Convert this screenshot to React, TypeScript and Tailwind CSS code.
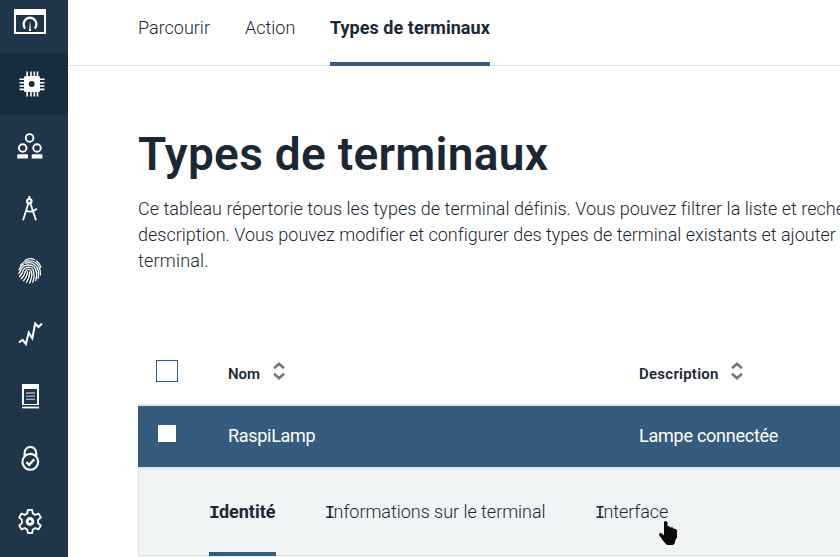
import type { ReactNode } from 'react';

function DashboardIcon() {
  return (
    <svg width="32" height="25" viewBox="0 0 32 25" fill="none">
      <path d="M0 0H32V25H0Z M2 6V23H30V6Z" fill="white" fillRule="evenodd" />
      <path d="M11.2 19.4A6.4 6.4 0 1 1 20.8 19.4" stroke="white" strokeWidth="2.3" />
      <path d="M16 11.5L17 22H15Z" fill="white" />
    </svg>
  );
}

function ChipIcon() {
  return (
    <svg width="26" height="26" viewBox="0 0 26 26">
      <path d="M8.2 .5V25.5M12 .5V25.5M15.3 .5V25.5M18.5 .5V25.5M.5 8.2H25.5M.5 11.7H25.5M.5 15H25.5M.5 18.4H25.5" stroke="white" strokeWidth="1.6" />
      <rect x="5" y="5" width="16" height="16" rx="1.5" fill="white" />
      <circle cx="12.7" cy="13" r="3" fill="#172c3c" />
    </svg>
  );
}

function UsersIcon() {
  return (
    <svg width="26" height="26" viewBox="0 0 26 26" fill="none" stroke="white" strokeWidth="1.9">
      <circle cx="12.6" cy="4.9" r="3.8" />
      <circle cx="5.7" cy="15" r="3.8" />
      <circle cx="20" cy="15" r="3.8" />
      <path d="M.2 25.6V22.5Q.4 21.2 1.5 21.2H9.8Q11 21.2 11 22.5V25.6ZM14.7 25.6V22.5Q14.9 21.2 16 21.2H24.5Q25.5 21.2 25.5 22.5V25.6Z" fill="white" stroke="none" />
    </svg>
  );
}

function CompassIcon() {
  return (
    <svg width="16" height="25" viewBox="0 0 16 25" fill="none" stroke="white">
      <path d="M7.3 0V3" strokeWidth="2" />
      <circle cx="7.3" cy="5.2" r="2.2" strokeWidth="2.2" />
      <path d="M6.3 7.8L1 24.3M8.5 7.8L14 24.3M4.2 14.5C7 16.5 12 15.6 14.8 12.7" strokeWidth="1.8" />
    </svg>
  );
}

function FingerprintIcon() {
  return (
    <svg width="24" height="26" viewBox="0 0 24 26" fill="none" stroke="white" strokeWidth="1.25" strokeLinecap="round">
      <path d="M7 2.2Q12-.5 16.5 1.7M18.3 2.8Q22 5.3 23 9.5" />
      <path d="M2.5 7.2Q6.5 2.3 12 2.8Q18 3.2 20.5 7.8Q22.8 12 22.5 17" />
      <path d="M1 12Q2 8.3 5.3 6.4M7.2 5.5Q13 3.2 17.3 7.2Q21.8 12.3 20.2 20.3" />
      <path d="M.8 15.5Q2.4 14 3 11.5Q5 7.3 10 6.8Q15.6 6.8 17.6 11.3Q19.6 16.4 17.7 22.5" />
      <path d="M1.6 18.5Q4.6 15.5 5.1 12.6Q6.6 9 11 9Q14.5 9.3 15.6 13.3Q16.9 18.6 14.8 24.3" />
      <path d="M3.2 20.8Q6.9 17.4 7.2 13.6Q9 10.4 11.7 11.5Q14.9 13.8 13.4 19.6Q12.8 22.5 11.6 25" />
      <path d="M5.5 22.7Q9.5 18.5 9.6 13.6M8.4 24.3Q11.4 20.3 11.8 14" />
    </svg>
  );
}

function TrendIcon() {
  return (
    <svg width="25" height="24" viewBox="0 0 25 24" fill="none" stroke="white" strokeWidth="2">
      <path d="M1 20.5L4.5 17.8L8 22L10.7 10.5L14.3 16.3L17.2 1.5L20.5 5L24 1.5" />
    </svg>
  );
}

function LogIcon() {
  return (
    <svg width="17" height="25" viewBox="0 0 17 25">
      <path d="M0 0H17V21H0Z M2 5V20H15V5Z" fill="white" fillRule="evenodd" />
      <path d="M0 23.5H17" stroke="white" strokeWidth="1.8" />
      <path d="M4 9H13M4 12.2H13M4 15.4H13" stroke="#aab4bc" strokeWidth="1.3" />
    </svg>
  );
}

function LockIcon() {
  return (
    <svg width="19" height="25" viewBox="0 0 19 25" fill="none" stroke="white" strokeWidth="2.1">
      <circle cx="9.3" cy="15.8" r="7.9" />
      <path d="M3.6 10V6.8A5.8 5.8 0 0 1 15.2 6.8V10" />
      <path d="M5.4 16.2L8.1 18.8L13.2 13.4" strokeWidth="2.3" />
    </svg>
  );
}

function GearIcon() {
  return (
    <svg width="24" height="25" viewBox="0 0 24 25" fill="none" stroke="white" strokeWidth="1.8" strokeLinejoin="round">
      <path d="M9.8 1H14.2L14.8 4.5L17.2 5.9L20.6 4.6L22.8 8.5L20.1 10.8V14.2L22.8 16.5L20.6 20.4L17.2 19.1L14.8 20.5L14.2 24H9.8L9.2 20.5L6.8 19.1L3.4 20.4L1.2 16.5L3.9 14.2V10.8L1.2 8.5L3.4 4.6L6.8 5.9L9.2 4.5Z" />
      <circle cx="12" cy="12.5" r="2.9" strokeWidth="3" />
    </svg>
  );
}

function SortIcon() {
  return (
    <svg className="mb-[6px]" width="12" height="18" viewBox="0 0 12 18" fill="none" stroke="#6f7b7b" strokeWidth="2.6">
      <path d="M1 6.3L6 1.8L11 6.3M1 11.7L6 16.2L11 11.7" />
    </svg>
  );
}

function PointerIcon() {
  return (
    <svg className="absolute left-[659px] top-[521px]" width="18" height="24" viewBox="0 0 18 24">
      <path d="M5 1.5Q5 0 6.5 0T8.5 1.5V5.5L9 5Q11 5 11.5 6.5Q14 5.8 14.5 7.8Q18 7.2 18 10V16L16 20V22L14 24H8L5 21L0 14V12.5Q2 11.5 3.5 13L5 14.3Z" fill="#0c0a0a" />
    </svg>
  );
}

/* Slab-style capital used at the start of the detail tabs. */
function SlabI({ bold = false }: { bold?: boolean }) {
  return <span className={bold ? "font-['Liberation_Mono'] font-bold tracking-[-0.9px]" : "font-['Liberation_Mono'] tracking-[-1.8px]"}>I</span>;
}

function NavItem({ active = false, children }: { active?: boolean; children: ReactNode }) {
  return (
    <div className={`flex h-[62.5px] w-full shrink-0 items-center justify-center pr-[8px] ${active ? 'bg-[#172c3c] pl-[4px]' : ''}`}>
      {children}
    </div>
  );
}

export default function App() {
  return (
    <div className="flex h-[557px] w-[840px] overflow-hidden bg-white font-['Roboto',sans-serif] text-[#1b2834]">
      <nav className="flex w-[68px] shrink-0 flex-col overflow-hidden bg-[#1f364a]">
        <div className="-mt-[9.8px] flex flex-col">
          <NavItem><DashboardIcon /></NavItem>
          <NavItem active><ChipIcon /></NavItem>
          <NavItem><UsersIcon /></NavItem>
          <NavItem><CompassIcon /></NavItem>
          <NavItem><FingerprintIcon /></NavItem>
          <NavItem><TrendIcon /></NavItem>
          <NavItem><LogIcon /></NavItem>
          <NavItem><LockIcon /></NavItem>
          <NavItem><GearIcon /></NavItem>
        </div>
      </nav>
      <main className="min-w-0 flex-1 overflow-hidden whitespace-nowrap">
        <header className="flex h-[66px] border-b border-[#dfe6e8] pl-[70px] text-[18px] leading-[56px]">
          <span className="w-[107px] font-light">Parcourir</span>
          <span className="w-[85px] font-light">Action</span>
          <span className="h-[66px] w-[160px] border-b-4 border-[#325d80] font-bold tracking-[0.04px]">Types de terminaux</span>
        </header>
        <section className="h-[340px] pl-[70px] pt-[58px]">
          <h1 className="h-[60px] text-[46px] font-semibold leading-[60px] tracking-[0.28px]">Types de terminaux</h1>
          <div className="mt-[12px] text-[18px] font-light leading-[26px]">
            <p className="tracking-[0.03px]">Ce tableau répertorie tous les types de terminal définis. Vous pouvez filtrer la liste et reche</p>
            <p className="tracking-[-0.01px]">description. Vous pouvez modifier et configurer des types de terminal existants et ajouter</p>
            <p className="tracking-[0.2px]">terminal.</p>
          </div>
          <div className="mt-[64px] flex h-[68px] items-center border-b-2 border-[#dfe6e8] text-[15px] font-semibold">
            <div className="w-[90px] pl-[18px]"><div className="size-[22px] border border-[#325d80] outline -outline-offset-1 outline-[#325d80]/25" /></div>
            <div className="flex w-[411px] items-center gap-[12px] pt-[6px]"><span className="w-[33px]">Nom</span><SortIcon /></div>
            <div className="flex items-center gap-[12px] pt-[6px]"><span className="w-[80px] tracking-[0.25px]">Description</span><SortIcon /></div>
          </div>
        </section>
        <section className="ml-[70px]">
          <div className="flex h-[61px] items-center bg-[#355c7f] text-[18px] text-white">
            <div className="w-[90px] pb-[6px] pl-[20px]"><div className="h-[17px] w-[18px] bg-white" /></div>
            <span className="w-[411px] pb-[2px] tracking-[-0.3px]">RaspiLamp</span>
            <span className="pb-[2px] tracking-[-0.25px]">Lampe connectée</span>
          </div>
          <div className="h-[90px] border-l border-t-2 border-[#dfe6e8] bg-[#f0f4f5]">
            <div className="flex h-[87px] border-b border-[#dfe6e8] pl-[70px] text-[18px] leading-[86px]">
              <span className="mr-[48.5px] h-[87px] w-[67px] border-b-4 border-[#325d80] font-bold"><SlabI bold />dentité</span>
              <span className="w-[270px] font-light tracking-[-0.03px]"><SlabI />nformations sur le terminal</span>
              <span className="font-light tracking-[-0.1px]"><SlabI />nterface</span>
            </div>
          </div>
        </section>
      </main>
      <PointerIcon />
    </div>
  );
}
